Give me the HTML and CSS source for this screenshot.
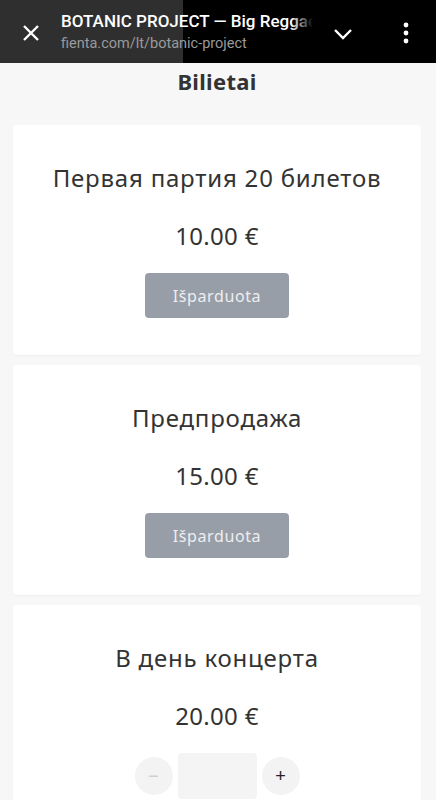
FILE: index.html
```html
<!DOCTYPE html>
<html>
<head>
    <title>Bilietai</title>
    <link rel="stylesheet" href="styles.css">
</head>
<body>
    <div class="topbar">
        <div class="close">
            <svg width="20" height="20" viewBox="0 0 20 20"><path d="M3 3 L17 17 M17 3 L3 17" stroke="#fff" stroke-width="2.4" fill="none"/></svg>
        </div>
        <div class="tab-info">
            <div class="tab-title">BOTANIC PROJECT — Big Reggae</div>
            <div class="tab-url">fienta.com/lt/botanic-project</div>
        </div>
        <div class="chevron">
            <svg width="20" height="12" viewBox="0 0 20 12"><path d="M2 2 L10 10 L18 2" stroke="#fff" stroke-width="2.4" fill="none"/></svg>
        </div>
        <div class="dots">
            <svg width="8" height="22" viewBox="0 0 8 22"><circle cx="4" cy="3" r="2.4" fill="#fff"/><circle cx="4" cy="11" r="2.4" fill="#fff"/><circle cx="4" cy="19" r="2.4" fill="#fff"/></svg>
        </div>
    </div>

    <div class="page">
        <h2 class="heading">Bilietai</h2>

        <div class="ticket">
            <div class="ticket-name">Первая партия 20 билетов</div>
            <div class="ticket-price">10.00 €</div>
            <button class="sold-out">Išparduota</button>
        </div>

        <div class="ticket">
            <div class="ticket-name">Предпродажа</div>
            <div class="ticket-price">15.00 €</div>
            <button class="sold-out">Išparduota</button>
        </div>

        <div class="ticket">
            <div class="ticket-name">В день концерта</div>
            <div class="ticket-price">20.00 €</div>
            <div class="stepper">
                <button class="step minus">−</button>
                <div class="qty"></div>
                <button class="step plus">+</button>
            </div>
        </div>
    </div>
</body>
</html>
```

FILE: styles.css
```css
body {
    margin: 0;
    background: #f7f7f7;
    font-family: "Noto Sans", sans-serif;
    color: #333;
    overflow: hidden;
}
.topbar {
    height: 63px;
    display: flex;
    align-items: center;
    background: linear-gradient(to right, #2f2f2f 0, #2f2f2f 183px, #000 183px);
    font-family: Roboto, sans-serif;
}
.close { width: 61px; flex: none; display: flex; justify-content: center; padding-top: 2px; }
.tab-info { width: 252px; flex: none; overflow: hidden; position: relative; }
.tab-info::after {
    content: "";
    position: absolute;
    top: 0;
    right: 0;
    width: 22px;
    height: 24px;
    background: linear-gradient(to right, rgba(0,0,0,0), #000);
}
.tab-title {
    color: #fff;
    font-size: 17px;
    font-weight: 500;
    white-space: nowrap;
    overflow: hidden;
    line-height: 23px;
}
.tab-url { color: #9a9a9a; font-size: 14.5px; line-height: 20px; margin-top: 1px; }
.chevron { width: 40px; flex: none; display: flex; justify-content: center; padding-top: 4px; margin: 0 13px 0 10px; }
.dots { flex: 1; display: flex; justify-content: center; padding-top: 2px; }

.page { padding: 0 15px 0 13px; }
.heading {
    margin: 0;
    text-align: center;
    font-size: 22px;
    font-weight: 700;
    letter-spacing: 0.3px;
    line-height: 36px;
    padding: 0 0 26px;
    color: #333;
}
.ticket {
    background: #fff;
    border-radius: 4px;
    box-shadow: 0 1px 2px rgba(0,0,0,0.04);
    margin-bottom: 10px;
    padding: 38px 20px 37px;
    display: flex;
    flex-direction: column;
    align-items: center;
}
.ticket-name { font-size: 24px; line-height: 30px; letter-spacing: 0.8px; }
.ticket-price { font-size: 24px; line-height: 32px; margin-top: 27px; letter-spacing: 0.3px; }
.sold-out {
    margin-top: 21px;
    width: 144px;
    height: 45px;
    border: none;
    border-radius: 4px;
    background: #989ea8;
    color: #eceef0;
    font-family: "Noto Sans", sans-serif;
    font-size: 16px;
    letter-spacing: 0.6px;
}
.stepper { display: flex; align-items: center; gap: 5px; margin-top: 21px; }
.step {
    width: 38px;
    height: 38px;
    border-radius: 50%;
    border: none;
    background: #f3f3f3;
    font-size: 18px;
    color: #222;
    padding: 0;
}
.step.minus { color: #d0d0d0; }
.qty { width: 79px; height: 46px; background: #f4f4f4; border-radius: 4px; }
```
